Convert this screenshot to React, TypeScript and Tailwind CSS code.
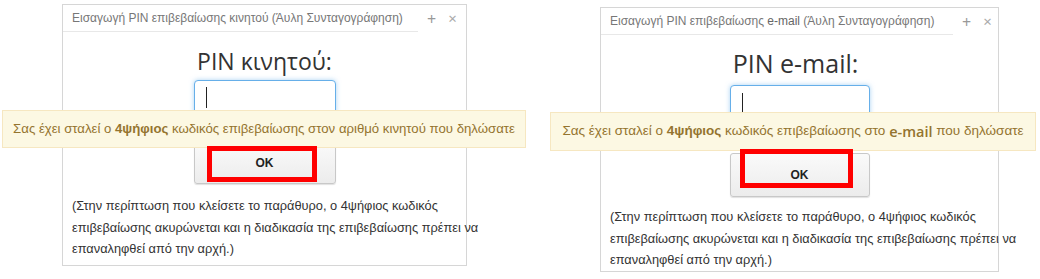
import React from "react";

const sans = { fontFamily: "'Liberation Sans', Arial, sans-serif" };

function Header({ title, lineW }: { title: React.ReactNode; lineW: string }) {
  return (
    <div className="flex items-center h-[27px] w-full">
      <div
        className={`${lineW} h-full flex items-center pl-[9px] border-b border-[#e8e8e8] text-[12px] text-[#777] whitespace-nowrap`}
        style={sans}
      >
        {title}
      </div>
      <span className="ml-[9px] text-[16px] text-[#999] leading-none">+</span>
      <span className="ml-[12px] text-[15px] text-[#aaa] leading-none">×</span>
    </div>
  );
}

function PinInput({ cls }: { cls: string }) {
  return (
    <div
      className={`${cls} flex items-center pl-[11px] border border-[#66afe9] rounded-[4px] bg-white shadow-[0_0_5px_rgba(102,175,233,0.55)]`}
    >
      <div className="w-[1px] h-[21px] bg-[#222]" />
    </div>
  );
}

function OkButton({ cls }: { cls: string }) {
  return (
    <div
      className={`${cls} flex items-center justify-center border border-[#c8c8c8] rounded-[3px] bg-gradient-to-b from-[#fafafa] to-[#ececec] shadow-[0_1px_1px_rgba(0,0,0,0.12)] text-[12px] font-bold text-[#222]`}
      style={sans}
    >
      OK
    </div>
  );
}

function Note({ cls }: { cls: string }) {
  return (
    <div className={`${cls} w-full text-[12.8px] text-[#333] whitespace-nowrap`} style={sans}>
      (Στην περίπτωση που κλείσετε το παράθυρο, ο 4ψήφιος κωδικός
      <br />
      επιβεβαίωσης ακυρώνεται και η διαδικασία της επιβεβαίωσης πρέπει να
      <br />
      επαναληφθεί από την αρχή.)
    </div>
  );
}

export default function App() {
  return (
    <div className="flex w-[1040px] h-[279px] bg-white overflow-hidden">
      {/* κινητό */}
      <div className="relative w-[530px] h-full shrink-0">
        <div className="ml-[62px] mt-[4px] w-[405px] h-[262px] border border-[#d6d6d6] flex flex-col items-center">
          <Header title="Εισαγωγή PIN επιβεβαίωσης κινητού (Άυλη Συνταγογράφηση)" lineW="w-[355px]" />
          <div
            className="mt-[13px] h-[32px] flex items-center text-[23px] text-[#333]"
            style={{ fontFamily: "'Open Sans', sans-serif" }}
          >
            PIN κινητού:
          </div>
          <PinInput cls="mt-[3px] w-[142px] h-[35px]" />
          <OkButton cls="mt-[27px] w-[142px] h-[42px]" />
          <Note cls="mt-[11px] pl-[9px] leading-[21.5px]" />
        </div>

        <div
          className="absolute left-[2px] top-[110px] w-[524px] h-[38px] flex items-center justify-center bg-[#fcf8e3] border border-[#f6e7c1] text-[13.2px] text-[#94742f] whitespace-nowrap"
          style={sans}
        >
          Σας έχει σταλεί ο&nbsp;<b className="font-bold">4ψήφιος</b>&nbsp;κωδικός επιβεβαίωσης στον αριθμό κινητού που δηλώσατε
        </div>
        <div className="absolute left-[207px] top-[146px] w-[110px] h-[36px] border-[5px] border-[#ff0000]" />
      </div>

      {/* e-mail */}
      <div className="relative flex-1 h-full">
        <div className="ml-[70px] mt-[7px] w-[399px] h-[265px] border border-[#d6d6d6] flex flex-col items-center">
          <Header
            title={
              <>
                Εισαγωγή PIN επιβεβαίωσης&nbsp;<span className="text-[#666]">e-mail</span>&nbsp;(Άυλη Συνταγογράφηση)
              </>
            }
            lineW="w-[352px]"
          />
          <div
            className="mt-[12px] h-[34px] flex items-center pr-[8px] text-[25px] text-[#333]"
            style={{ fontFamily: "'Open Sans', sans-serif" }}
          >
            PIN e-mail:
          </div>
          <PinInput cls="mt-[4px] w-[140px] h-[36px]" />
          <OkButton cls="mt-[32px] w-[140px] h-[44px]" />
          <Note cls="mt-[9px] pl-[9px] leading-[21.5px]" />
        </div>

        <div
          className="absolute left-[20px] top-[112px] w-[486px] h-[39px] flex items-center justify-center bg-[#fcf8e3] border border-[#f6e7c1] text-[13.5px] text-[#94742f] whitespace-nowrap"
          style={sans}
        >
          Σας έχει σταλεί ο&nbsp;<b className="font-bold">4ψήφιος</b>&nbsp;κωδικός επιβεβαίωσης στο&nbsp;
          <span className="text-[14.5px] font-semibold" style={{ fontFamily: "'Open Sans', sans-serif" }}>
            e-mail
          </span>
          &nbsp;που δηλώσατε
        </div>
        <div className="absolute left-[210px] top-[149px] w-[113px] h-[39px] border-[5px] border-[#ff0000]" />
      </div>
    </div>
  );
}
